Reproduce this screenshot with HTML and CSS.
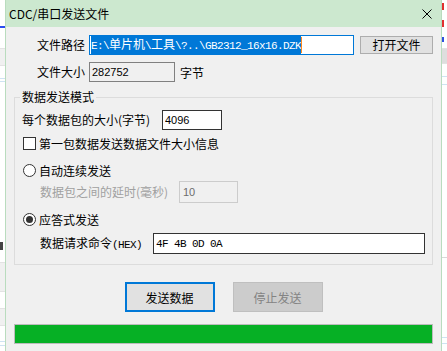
FILE: index.html
```html
<!DOCTYPE html>
<html lang="zh-CN">
<head>
    <meta charset="UTF-8">
    <meta name="viewport" content="width=device-width, initial-scale=1.0">
    <title>CDC/串口发送文件</title>
    <link rel="stylesheet" href="styles.css">
</head>
<body>
    <div class="desk">
        <!-- bits of the window behind the dialog -->
        <div class="side">
            <div class="gap" style="height: 26px"></div>
            <div class="link"></div>
            <div class="gap" style="height: 20px"></div>
            <div class="band" style="height: 16px"></div>
            <div class="gap" style="height: 12px"></div>
            <div class="hair"></div>
            <div class="gap" style="height: 2px"></div>
            <div class="hair"></div>
            <div class="gap" style="height: 160px"></div>
            <div class="ink"></div>
            <div class="gap" style="height: 12px"></div>
            <div class="band" style="height: 28px"></div>
            <div class="gap" style="height: 16px"></div>
            <div class="band" style="height: 16px"></div>
            <div class="gap" style="height: 15px"></div>
            <div class="hair"></div>
            <div class="gap" style="height: 3px"></div>
            <div class="hair"></div>
        </div>

        <div class="window">
            <div class="titlebar">
                <span class="title">CDC/串口发送文件</span>
                <svg class="close" width="10" height="10" viewBox="0 0 10 10">
                    <path d="M0.5 0.5 L9.5 9.5 M9.5 0.5 L0.5 9.5" stroke="#000" stroke-width="1" fill="none"/>
                </svg>
            </div>

            <div class="content">
                <div class="row row-top">
                    <label class="label label-file">文件路径</label>
                    <div class="field field-path"><span class="sel">E:\<span class="cjk">单片机</span>\<span class="cjk">工具</span>\?..\GB2312_16x16.DZK</span><span class="caret"></span></div>
                    <button class="btn btn-open">打开文件</button>
                </div>

                <div class="row row-size">
                    <label class="label label-file">文件大小</label>
                    <input class="field field-size" type="text" value="282752" readonly>
                    <span class="unit">字节</span>
                </div>

                <fieldset class="group">
                    <legend>数据发送模式</legend>

                    <div class="row row-packet">
                        <label class="label label-packet">每个数据包的大小(字节)</label>
                        <input class="field field-packet" type="text" value="4096">
                    </div>

                    <div class="option option-check">
                        <span class="check"></span>
                        <span>第一包数据发送数据文件大小信息</span>
                    </div>

                    <div class="option option-auto">
                        <span class="radio"></span>
                        <span>自动连续发送</span>
                    </div>

                    <div class="row row-delay">
                        <label class="label label-delay">数据包之间的延时(毫秒)</label>
                        <input class="field field-delay" type="text" value="10" disabled>
                    </div>

                    <div class="option option-ack">
                        <span class="radio radio-on"></span>
                        <span>应答式发送</span>
                    </div>

                    <div class="row row-hex">
                        <label class="label label-hex">数据请求命令<span class="mono">(HEX)</span></label>
                        <input class="field field-hex mono" type="text" value="4F 4B 0D 0A">
                    </div>
                </fieldset>

                <div class="actions">
                    <button class="btn btn-big btn-default">发送数据</button>
                    <button class="btn btn-big" disabled>停止发送</button>
                </div>

                <div class="progress">
                    <div class="progress-fill" style="width: 100%"></div>
                </div>
            </div>
        </div>

        <div class="side">
            <div class="gap" style="height: 3px"></div>
            <div class="red"></div>
            <div class="gap" style="height: 10px"></div>
            <div class="red"></div>
            <div class="gap" style="height: 10px"></div>
            <div class="blue"></div>
            <div class="gap" style="height: 6px"></div>
            <div class="band band-dark" style="height: 14px"></div>
            <div class="gap" style="height: 12px"></div>
            <div class="hair"></div>
            <div class="gap" style="height: 7px"></div>
            <div class="hair"></div>
            <div class="gap" style="height: 172px"></div>
            <div class="line"></div>
            <div class="gap" style="height: 79px"></div>
            <div class="hair"></div>
            <div class="gap" style="height: 5px"></div>
            <div class="hair"></div>
        </div>
    </div>
</body>
</html>
```

FILE: styles.css
```css
body {
    margin: 0;
    background-color: #fff;
    font-family: "Noto Sans CJK SC", "Liberation Sans", sans-serif;
    font-size: 12px;
    color: #000;
    overflow: hidden;
}

.desk {
    display: flex;
    height: 351px;
}

/* background strips */
.side {
    width: 5px;
    display: flex;
    flex-direction: column;
}

.gap {
    flex: none;
}

.band {
    background-color: #f0f0f0;
    border-top: 1px solid #e3e3e3;
    border-bottom: 1px solid #e3e3e3;
}

.band-dark {
    background-color: #dedede;
}

.hair {
    height: 1px;
    background-color: #cfe3f2;
}

.line {
    height: 1px;
    background-color: #d8d8d8;
}

.link {
    height: 2px;
    background-color: #2a4cf0;
}

.ink {
    height: 8px;
    width: 3px;
    background-color: #444;
}

.red {
    height: 7px;
    width: 2px;
    background-color: #e03030;
}

.blue {
    height: 5px;
    width: 2px;
    background-color: #3050e0;
}

/* dialog */
.window {
    width: 437px;
    box-sizing: border-box;
    border-left: 1px solid #b9dcbe;
    border-right: 1px solid #b9dcbe;
    background-color: #f0f0f0;
}

.titlebar {
    height: 27px;
    background-color: #cce8cf;
    display: flex;
    align-items: center;
    justify-content: space-between;
    padding: 0 9px 0 3px;
}

.title {
    font-size: 12px;
    line-height: 16px;
}

.content {
    display: flex;
    flex-direction: column;
}

.row {
    display: flex;
    align-items: center;
    height: 20px;
}

.row-top {
    margin-top: 8px;
    padding-left: 31px;
}

.row-size {
    margin-top: 7px;
    padding-left: 31px;
}

.label {
    flex: none;
    line-height: 20px;
    white-space: nowrap;
}

.label-file {
    width: 52px;
}

.label-packet {
    width: 140px;
}

.label-delay {
    width: 139px;
    color: #a0a0a0;
}

.label-hex {
    width: 113px;
}

.field {
    box-sizing: border-box;
    height: 20px;
    margin: 0;
    padding: 0 0 0 2px;
    border: 1px solid #7a7a7a;
    background-color: #fff;
    font-family: "Liberation Sans", sans-serif;
    font-size: 11px;
    color: #000;
    outline: none;
}

.field-path {
    width: 265px;
    border-color: #0078d7;
    display: flex;
    align-items: center;
    padding-left: 1px;
    font-family: "Liberation Mono", monospace;
    font-size: 11px;
    letter-spacing: -0.6px;
}

.sel {
    background-color: #0078d7;
    color: #fff;
    line-height: 16px;
    white-space: nowrap;
}

.cjk {
    font-family: "Noto Sans CJK SC", sans-serif;
    font-size: 12px;
    letter-spacing: 0;
}

.caret {
    width: 1px;
    height: 16px;
    background-color: #ff8a1e;
}

.field-size {
    width: 86px;
    background-color: #f0f0f0;
    border-color: #808080;
}

.unit {
    margin-left: 5px;
}

.btn {
    box-sizing: border-box;
    margin: 0;
    padding: 0;
    border: 1px solid #adadad;
    background-color: #e1e1e1;
    font-family: "Noto Sans CJK SC", sans-serif;
    font-size: 12px;
    color: #000;
}

.btn-open {
    width: 73px;
    height: 18px;
    margin-left: 6px;
    line-height: 16px;
}

/* group box */
.group {
    box-sizing: border-box;
    width: 419px;
    margin: 7px 0 0 8px;
    padding: 0 0 10px 5px;
    border: 1px solid #dcdcdc;
    min-inline-size: 0;
}

.group legend {
    padding: 0 2px;
    line-height: 16px;
}

.row-packet {
    margin-top: 5px;
    padding-left: 2px;
}

.field-packet {
    width: 60px;
    border-color: #333;
}

.option {
    display: flex;
    align-items: center;
    height: 17px;
    padding-left: 3px;
    gap: 3px;
}

.option-check {
    margin-top: 5px;
}

.option-auto {
    margin-top: 10px;
}

.option-ack {
    margin-top: 8px;
}

.check {
    box-sizing: border-box;
    width: 13px;
    height: 13px;
    border: 1px solid #333;
    background-color: #fff;
}

.radio {
    box-sizing: border-box;
    width: 13px;
    height: 13px;
    border: 1px solid #333;
    border-radius: 50%;
    background-color: #fff;
    display: flex;
    align-items: center;
    justify-content: center;
}

.radio-on::after {
    content: "";
    width: 7px;
    height: 7px;
    border-radius: 50%;
    background-color: #333;
}

.row-delay {
    margin-top: 2px;
    padding-left: 20px;
    height: 22px;
}

.field-delay {
    width: 59px;
    height: 22px;
    background-color: #f0f0f0;
    border-color: #cccccc;
    color: #6d6d6d;
    padding-left: 3px;
}

.row-hex {
    margin-top: 5px;
    padding-left: 20px;
    height: 21px;
}

.mono {
    font-family: "Liberation Mono", monospace;
    font-size: 11px;
    letter-spacing: -0.6px;
}

.field-hex {
    width: 272px;
    height: 21px;
    border-color: #333;
}

/* buttons */
.actions {
    display: flex;
    justify-content: center;
    gap: 18px;
    margin-top: 17px;
}

.btn-big {
    width: 90px;
    height: 30px;
}

.btn-default {
    border: 2px solid #0078d7;
}

.btn-big:disabled {
    background-color: #cccccc;
    border-color: #bfbfbf;
    color: #838383;
}

.progress {
    box-sizing: border-box;
    width: 419px;
    height: 20px;
    margin: 12px 0 0 8px;
    border: 1px solid #bcbcbc;
    background-color: #e6e6e6;
}

.progress-fill {
    height: 100%;
    background-color: #06b025;
}
```
